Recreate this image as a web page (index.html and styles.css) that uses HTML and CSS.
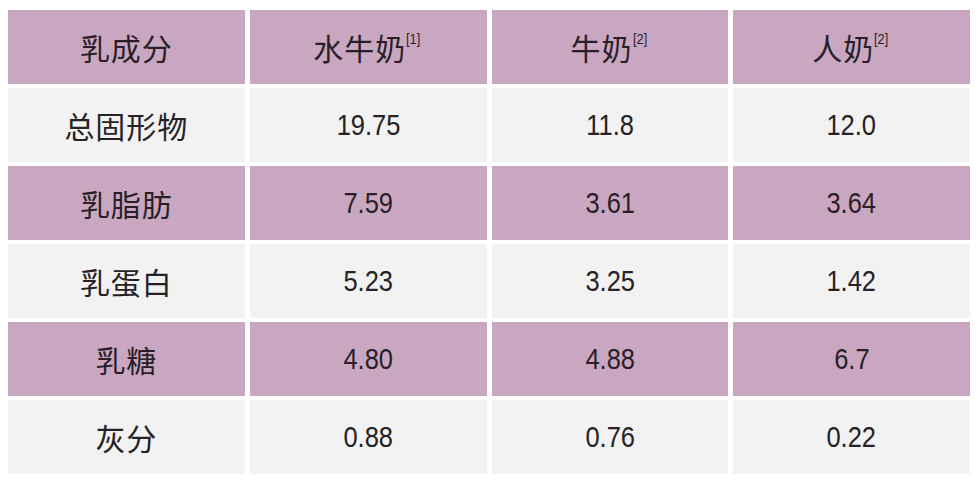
FILE: index.html
```html
<!DOCTYPE html>
<html lang="zh">
<head>
<meta charset="utf-8">
<link rel="stylesheet" href="styles.css">
</head>
<body>
<div class="table">
  <div class="cell pink">乳成分</div>
  <div class="cell pink">水牛奶<sup class="ref">[1]</sup></div>
  <div class="cell pink">牛奶<sup class="ref">[2]</sup></div>
  <div class="cell pink">人奶<sup class="ref">[2]</sup></div>

  <div class="cell grey">总固形物</div>
  <div class="cell grey"><span class="num">19.75</span></div>
  <div class="cell grey"><span class="num">11.8</span></div>
  <div class="cell grey"><span class="num">12.0</span></div>

  <div class="cell pink">乳脂肪</div>
  <div class="cell pink"><span class="num">7.59</span></div>
  <div class="cell pink"><span class="num">3.61</span></div>
  <div class="cell pink"><span class="num">3.64</span></div>

  <div class="cell grey">乳蛋白</div>
  <div class="cell grey"><span class="num">5.23</span></div>
  <div class="cell grey"><span class="num">3.25</span></div>
  <div class="cell grey"><span class="num">1.42</span></div>

  <div class="cell pink">乳糖</div>
  <div class="cell pink"><span class="num">4.80</span></div>
  <div class="cell pink"><span class="num">4.88</span></div>
  <div class="cell pink"><span class="num">6.7</span></div>

  <div class="cell grey">灰分</div>
  <div class="cell grey"><span class="num">0.88</span></div>
  <div class="cell grey"><span class="num">0.76</span></div>
  <div class="cell grey"><span class="num">0.22</span></div>
</div>
</body>
</html>
```
FILE: styles.css
```css
html, body {
  margin: 0;
  padding: 0;
  background: #ffffff;
}
body {
  padding: 10px 10px 0 8px;
  font-family: "Noto Sans CJK SC", sans-serif;
  color: #262226;
}
.table {
  display: grid;
  grid-template-columns: repeat(4, 1fr);
  grid-auto-rows: 74px;
  column-gap: 5px;
  row-gap: 4px;
  width: 962px;
}
.cell {
  display: flex;
  align-items: center;
  justify-content: center;
  font-size: 30px;
  letter-spacing: 1px;
  line-height: 1;
  font-family: "Noto Sans CJK SC", sans-serif;
}
.num {
  display: inline-block;
  font-family: "Liberation Sans", sans-serif;
  font-size: 30px;
  letter-spacing: 0;
  transform: scaleX(0.85);
}
.pink {
  background: #c9a7c1;
  color: #2a1f29;
}
.grey {
  background: #f1f2f1;
}
.ref {
  display: inline-block;
  font-family: "Liberation Sans", sans-serif;
  font-size: 15px;
  letter-spacing: 0;
  align-self: flex-start;
  margin-top: 21px;
  margin-left: 0;
  transform: scaleX(0.85);
  transform-origin: left center;
}
```
